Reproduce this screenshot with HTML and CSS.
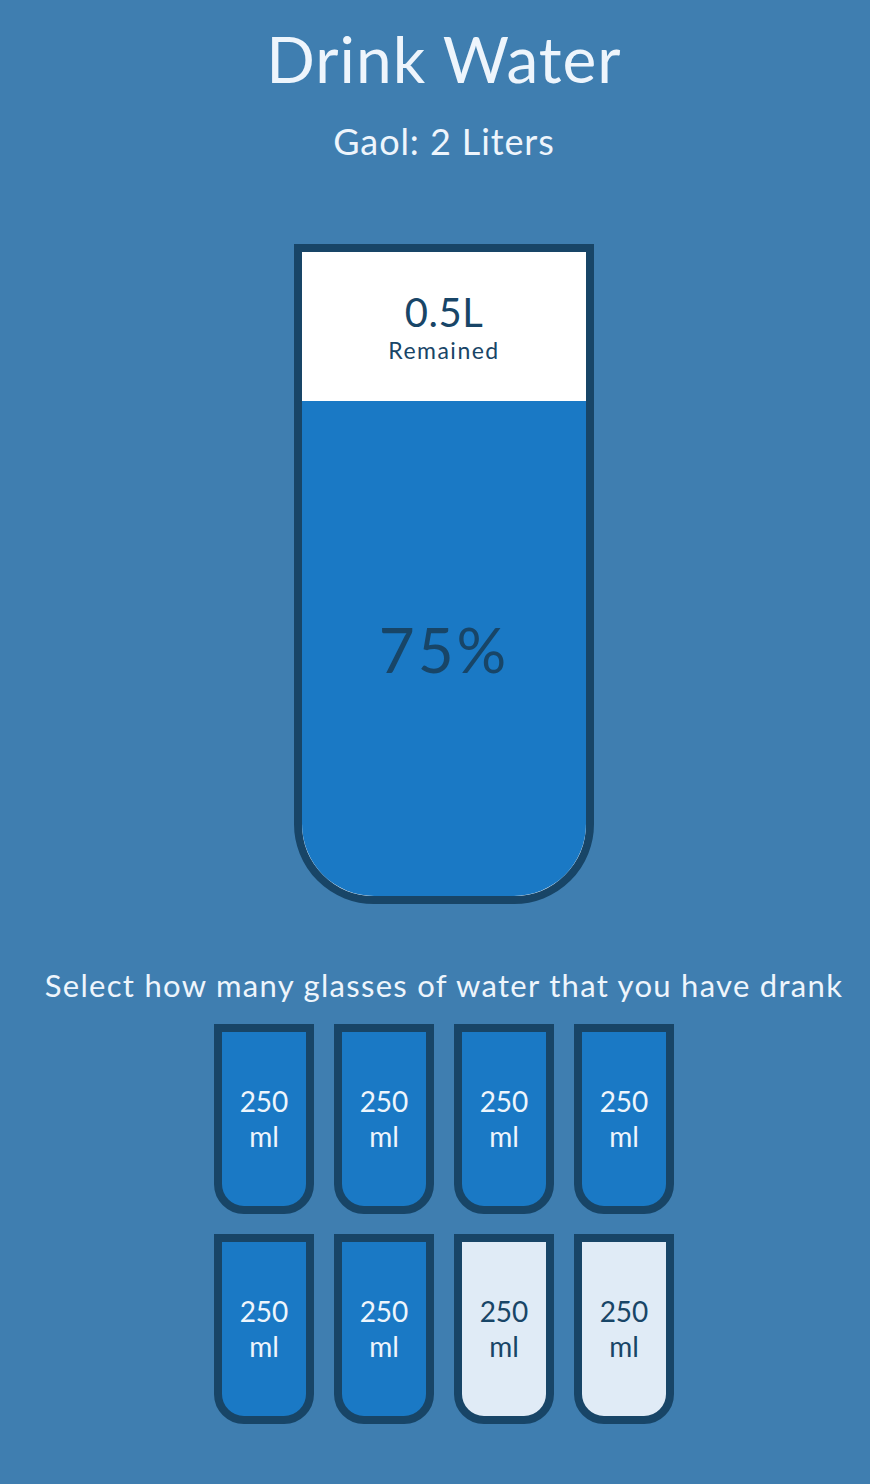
FILE: index.html
```html
<!DOCTYPE html>
<html lang="en">
<head>
<meta charset="UTF-8">
<title>Drink Water</title>
<link rel="stylesheet" href="styles.css">
</head>
<body>
  <h1 class="title">Drink Water</h1>
  <h3 class="goal">Gaol: 2 Liters</h3>

  <div class="cup">
    <div class="remained">
      <span class="liters">0.5L</span>
      <small class="label">Remained</small>
    </div>
    <div class="percentage">75%</div>
  </div>

  <p class="text">Select how many glasses of water that you have drank</p>

  <div class="cups">
    <div class="cup-small full">250 ml</div>
    <div class="cup-small full">250 ml</div>
    <div class="cup-small full">250 ml</div>
    <div class="cup-small full">250 ml</div>
    <div class="cup-small full">250 ml</div>
    <div class="cup-small full">250 ml</div>
    <div class="cup-small">250 ml</div>
    <div class="cup-small">250 ml</div>
  </div>
</body>
</html>
```

FILE: styles.css
```css
html, body {
  height: 100%;
}

body {
  margin: 0;
  padding: 0 0 0 18px;
  box-sizing: border-box;
  background-color: #3f7eb0;
  color: #eef5fc;
  font-family: "Lato", "Open Sans", sans-serif;
  display: flex;
  flex-direction: column;
  align-items: center;
}

.title {
  font-size: 64px;
  font-weight: 400;
  letter-spacing: 1px;
  margin: 19px 0 0;
  line-height: 1.25;
}

.goal {
  font-size: 36px;
  font-weight: 400;
  letter-spacing: 0.9px;
  margin: 20px 0;
  line-height: 1.25;
}

.cup {
  background-color: #fff;
  border: 8px solid #184567;
  color: #184567;
  border-radius: 0 0 80px 80px;
  height: 660px;
  width: 300px;
  box-sizing: border-box;
  margin: 60px 0 62px;
  display: flex;
  flex-direction: column;
  overflow: hidden;
}

.remained {
  flex: 1;
  display: flex;
  flex-direction: column;
  align-items: center;
  justify-content: center;
  text-align: center;
}

.liters {
  font-size: 40px;
  line-height: 1.2;
  letter-spacing: 0.5px;
}

.label {
  font-size: 23px;
  line-height: 1.3;
  letter-spacing: 1.5px;
}

.percentage {
  height: 495px;
  background-color: #1a79c5;
  display: flex;
  align-items: center;
  justify-content: center;
  font-size: 62px;
  letter-spacing: 3px;
}

.text {
  font-size: 31px;
  letter-spacing: 1.3px;
  margin: 0 0 10px;
  text-align: center;
  white-space: nowrap;
}

.cups {
  display: flex;
  flex-wrap: wrap;
  justify-content: center;
  width: 560px;
}

.cup-small {
  box-sizing: border-box;
  width: 100px;
  height: 190px;
  margin: 10px;
  border: 8px solid #184567;
  border-radius: 0 0 30px 30px;
  background-color: #e0ebf6;
  color: #184567;
  font-size: 28px;
  line-height: 1.25;
  display: flex;
  align-items: center;
  justify-content: center;
  text-align: center;
}

.cup-small.full {
  background-color: #1a79c5;
  color: #eef5fc;
}
```
